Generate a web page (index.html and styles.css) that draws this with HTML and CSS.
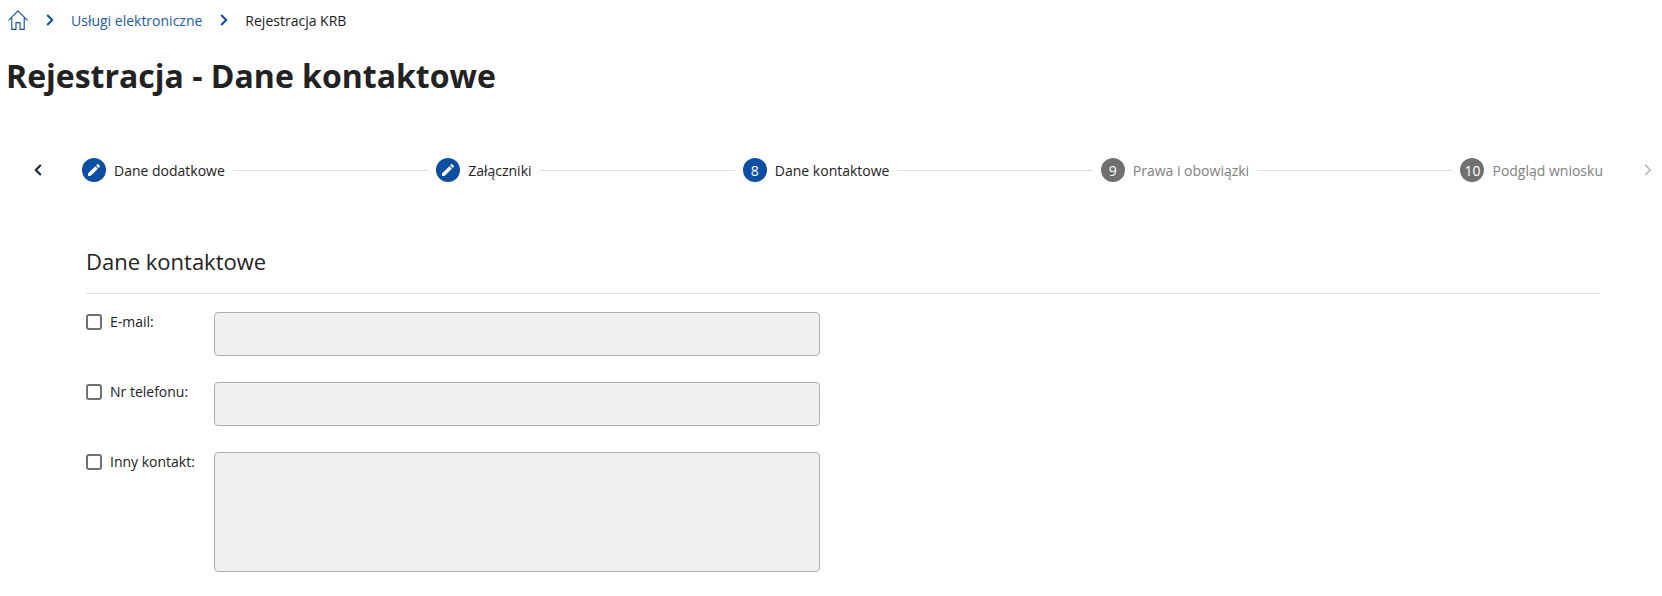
FILE: index.html
```html
<!DOCTYPE html>
<html lang="pl">
<head>
<meta charset="utf-8">
<title>Rejestracja - Dane kontaktowe</title>
<link rel="stylesheet" href="styles.css">
</head>
<body>
<nav class="crumbs">
  <svg class="home" viewBox="0 0 20 20" width="20" height="20" fill="none" stroke="#0b4ea2" stroke-width="1.1" stroke-linejoin="round" stroke-linecap="round"><path d="M.8 10.2 10 .8l9.200 9.400M3.800 8.200V19.400H8V12.600H12V19.400H16.200V8.200"/></svg>
  <svg class="chev" viewBox="0 0 8 12" width="8" height="12" fill="none" stroke="#0b4ea2" stroke-width="2"><path d="M1.200 1 6.200 6l-5 5"/></svg>
  <a class="crumb-link">Usługi elektroniczne</a>
  <svg class="chev" viewBox="0 0 8 12" width="8" height="12" fill="none" stroke="#0b4ea2" stroke-width="2"><path d="M1.200 1 6.200 6l-5 5"/></svg>
  <span class="crumb-current">Rejestracja KRB</span>
</nav>
<h1 class="title">Rejestracja - Dane kontaktowe</h1>
<div class="stepper">
  <svg class="nav-prev" viewBox="0 0 8 12" width="8" height="12" fill="none" stroke="#0f2238" stroke-width="2"><path d="M6.800 1 1.800 6l5 5"/></svg>
  <ol class="steps">
    <li class="step done"><span class="dot"><svg viewBox="0 0 24 24" width="16" height="16" fill="#fff"><path d="M3 17.250V21h3.750L17.810 9.940l-3.750-3.750L3 17.250zM20.710 7.040a1 1 0 0 0 0-1.410l-2.340-2.340a1 1 0 0 0-1.410 0l-1.830 1.830 3.750 3.750 1.830-1.830z"/></svg></span><span class="name">Dane dodatkowe</span></li>
    <li class="line"></li>
    <li class="step done"><span class="dot"><svg viewBox="0 0 24 24" width="16" height="16" fill="#fff"><path d="M3 17.250V21h3.750L17.810 9.940l-3.750-3.750L3 17.250zM20.710 7.040a1 1 0 0 0 0-1.410l-2.340-2.340a1 1 0 0 0-1.410 0l-1.830 1.830 3.750 3.750 1.830-1.830z"/></svg></span><span class="name">Załączniki</span></li>
    <li class="line"></li>
    <li class="step active"><span class="dot">8</span><span class="name">Dane kontaktowe</span></li>
    <li class="line"></li>
    <li class="step todo"><span class="dot">9</span><span class="name">Prawa i obowiązki</span></li>
    <li class="line"></li>
    <li class="step todo"><span class="dot">10</span><span class="name">Podgląd wniosku</span></li>
  </ol>
  <svg class="nav-next" viewBox="0 0 8 12" width="8" height="12" fill="none" stroke="#b4b4b4" stroke-width="1.600"><path d="M1.200 1 6.200 6l-5 5"/></svg>
</div>
<section class="panel">
  <h2 class="panel-title">Dane kontaktowe</h2>
  <form class="form">
    <label class="check"><input type="checkbox" class="box"><span>E-mail:</span></label>
    <input type="text" class="field" disabled>
    <label class="check"><input type="checkbox" class="box"><span>Nr telefonu:</span></label>
    <input type="text" class="field" disabled>
    <label class="check"><input type="checkbox" class="box"><span>Inny kontakt:</span></label>
    <textarea class="field area" disabled></textarea>
  </form>
</section>
</body>
</html>
```
FILE: styles.css
```css
* { box-sizing: border-box; }
html, body { margin: 0; padding: 0; background: #fff; }
body { font-family: "Open Sans", "Liberation Sans", sans-serif; color: #222; font-size: 14px; height: 596px; overflow: hidden; }

.crumbs { display: flex; align-items: center; height: 20px; margin: 10px 0 0 8px; }
.home { flex: none; }
.chev { flex: none; margin: 0 17px 0 18px; }
.crumb-link { color: #1c5ba8; }
.crumb-current { color: #1b1b1b; }

.title { margin: 24px 0 0 6px; font-size: 32px; line-height: 44px; font-weight: 700; color: #222; }

.stepper { display: flex; align-items: center; margin-top: 48px; height: 48px; padding-left: 34px; padding-right: 10px; }
.nav-prev { flex: none; margin-right: 40px; }
.nav-next { flex: none; margin-left: 41px; }
.steps { flex: 1; display: flex; align-items: center; list-style: none; margin: 0; padding: 0; }
.step { display: flex; align-items: center; flex: none; gap: 8px; }
.dot { width: 24px; height: 24px; border-radius: 50%; display: flex; align-items: center; justify-content: center; color: #fff; font-size: 14px; flex: none; }
.done .dot, .active .dot { background: #0b4ea2; }
.todo .dot { background: #707070; }
.name { white-space: nowrap; }
.done .name, .active .name { color: #222; }
.todo .name { color: #808080; }
.line { flex: 1; height: 1px; background: #dedede; margin: 0 8px; }

.panel { margin: 0 62px 0 86px; padding-top: 52px; }
.panel-title { margin: 0; font-size: 22px; line-height: 30px; font-weight: 400; color: #222; padding-bottom: 17px; border-bottom: 1px solid #dedede; }

.form { display: grid; grid-template-columns: 128px 606px; row-gap: 26px; margin-top: 18px; }
.check { display: flex; align-items: flex-start; gap: 8px; padding-top: 0; line-height: 20px; color: #222; }
.box { appearance: none; -webkit-appearance: none; margin: 2px 0 0; width: 16px; height: 16px; border: 2px solid #707070; border-radius: 3px; background: #fff; flex: none; }
.field { display: block; width: 606px; height: 44px; margin: 0; padding: 8px; border: 1px solid #b0b0b0; border-radius: 4px; background: #f0f0f0; font: inherit; resize: none; }
.area { height: 120px; }
```
